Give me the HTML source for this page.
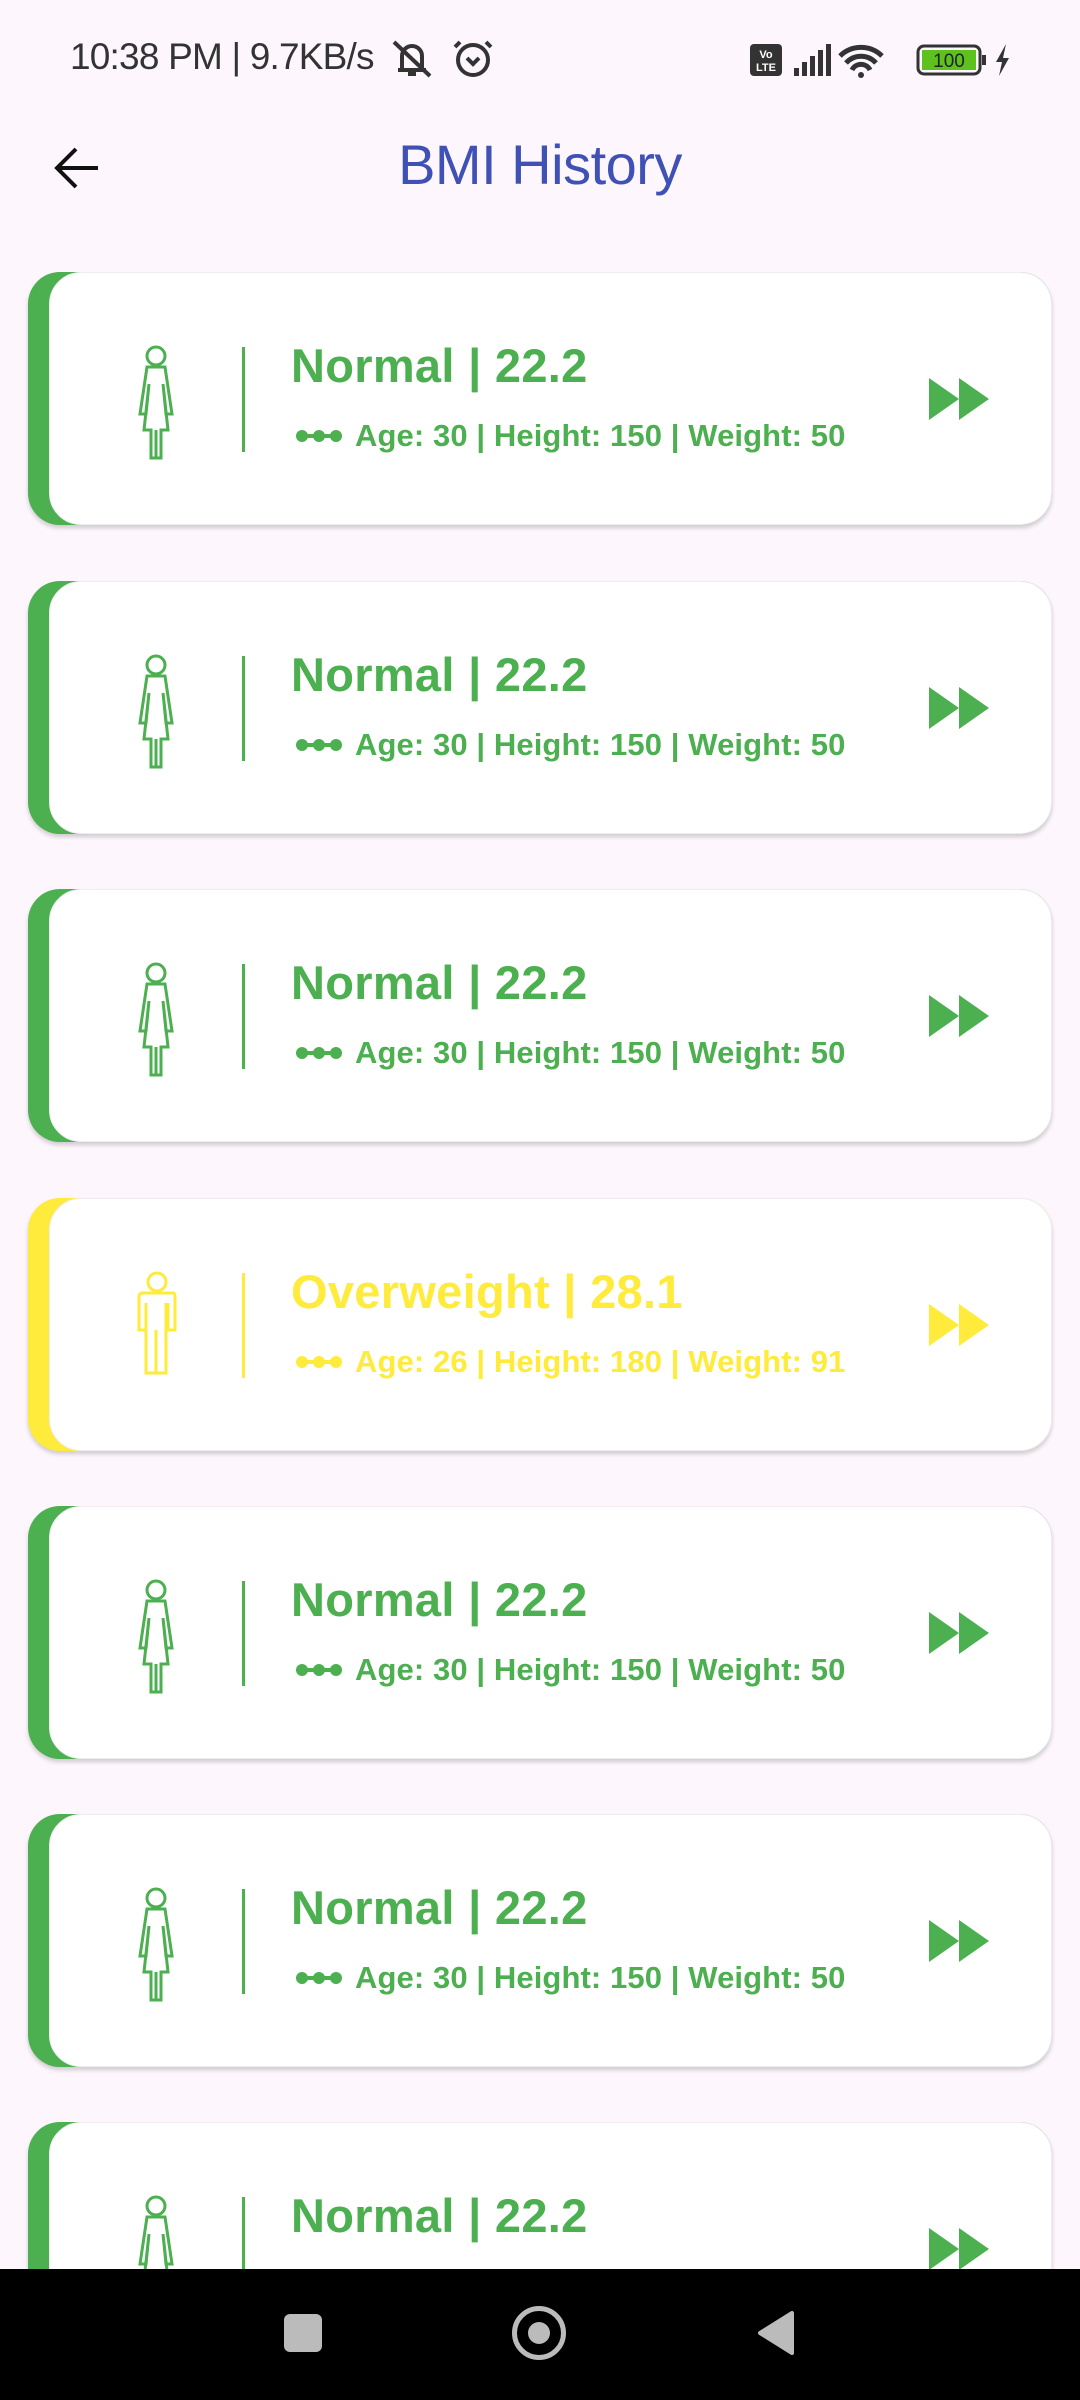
<!DOCTYPE html>
<html><head><meta charset="utf-8"><style>
*{margin:0;padding:0;box-sizing:border-box}
body{width:1080px;height:2400px;background:#fdf7fd;font-family:"Liberation Sans",sans-serif;position:relative;overflow:hidden}
.sb{position:absolute;top:36px;left:70px;font-size:37px;color:#333;letter-spacing:-0.8px}
.title{position:absolute;top:132px;left:0;width:1080px;text-align:center;font-size:56px;color:#3f51b5;letter-spacing:-0.5px}
.card{position:absolute;left:28px;width:1024px;height:253px;border-radius:32px;box-shadow:0 3px 4px rgba(0,0,0,0.18)}
.card .in{position:absolute;left:21px;right:0;top:0;bottom:0;background:#fff;border-radius:32px;border:1px solid #eee}
.card svg{position:absolute;left:-28px;top:0}
.t1{position:absolute;left:263px;top:66px;font-size:47px;font-weight:bold;white-space:nowrap;letter-spacing:0.3px}
.t2{position:absolute;left:327px;top:146px;font-size:31px;font-weight:bold;white-space:nowrap;letter-spacing:0.1px}
.g{background:#4caf50;color:#4caf50}.y{background:#ffeb3b;color:#ffeb3b}
.nav{position:absolute;left:0;top:2269px;width:1080px;height:131px;background:#000}
</style></head><body>
<div class="sb">10:38 PM | 9.7KB/s</div>
<svg style="position:absolute;left:390px;top:36px" width="110" height="46" viewBox="0 0 110 46" fill="none" stroke="#333" stroke-width="4">
<path d="M12 34 V20 a10 10 0 0 1 20 0 V34 M8 34 H36 M18 38 h8 M4 6 L40 40"/>
<circle cx="83" cy="24" r="15"/><path d="M77 22 l6 6 6-6 M70 6 l-5 5 M96 6 l5 5"/></svg>
<svg style="position:absolute;left:748px;top:40px" width="270" height="40" viewBox="0 0 270 40">
<rect x="2" y="4" width="32" height="32" rx="4" fill="#333"/><text x="18" y="18" font-size="11" fill="#fff" text-anchor="middle" font-family="Liberation Sans" font-weight="bold">Vo</text><text x="18" y="31" font-size="11" fill="#fff" text-anchor="middle" font-family="Liberation Sans" font-weight="bold">LTE</text>
<g fill="#333"><rect x="46" y="28" width="5" height="8"/><rect x="54" y="22" width="5" height="14"/><rect x="62" y="16" width="5" height="20"/><rect x="70" y="10" width="5" height="26"/><rect x="78" y="4" width="5" height="32"/></g>
<path d="M92 16 a30 30 0 0 1 42 0 M98 23 a20 20 0 0 1 30 0 M104 30 a10 10 0 0 1 18 0" stroke="#333" stroke-width="5" fill="none"/><circle cx="113" cy="35" r="3" fill="#333"/>
<rect x="170" y="6" width="62" height="28" rx="6" fill="none" stroke="#333" stroke-width="3"/><rect x="174" y="10" width="54" height="20" fill="#5dc21e"/><rect x="234" y="15" width="4" height="10" fill="#333"/>
<text x="201" y="27" font-size="19" text-anchor="middle" fill="#222" font-family="Liberation Sans">100</text>
<path d="M258 4 L248 22 h6 l-3 14 10-18 h-6 z" fill="#333"/></svg>
<svg style="position:absolute;left:52px;top:146px" width="50" height="44" viewBox="0 0 50 44" fill="none" stroke="#111" stroke-width="4"><path d="M46 22 H6 M24 3 L5 22 L24 41"/></svg>
<div class="title">BMI History</div>

<div id="cards"></div>
<script>
const tops=[272,581,889,1198,1506,1814,2122];
const fem='<circle cx="156" cy="84" r="9"/><path d="M147 95 H165 L172 142 H166 L163 112 L168 158 H161 V186 H151 V158 H144 L149 112 L146 142 H140 Z M156 158 V186"/>';
const male='<circle cx="157" cy="84" r="9"/><path d="M141 95 H173 Q175 95 175 99 V132 H168 V105 M146 105 V132 H139 V99 Q139 95 143 95 M146 105 V175 H166 V105 M156 132 V175"/>';
let h='';
tops.forEach((t,i)=>{
 const y=i==3;const c=y?'y':'g';const col=y?'#ffeb3b':'#4caf50';
 h+=`<div class="card ${c}" style="top:${t}px"><div class="in"></div>
 <svg width="1080" height="253" viewBox="0 0 1080 253">
 <g fill="none" stroke="${col}" stroke-width="3">${y?male:fem}</g>
 <rect x="242" y="75" width="3" height="105" fill="${col}"/>
 <g fill="${col}"><circle cx="302" cy="164" r="6"/><circle cx="319" cy="164" r="6"/><circle cx="336" cy="164" r="6"/><rect x="302" y="162" width="34" height="4"/>
 <path d="M929 106 L959 127 L929 148 Z M959 106 L989 127 L959 148 Z"/></g></svg>
 <div class="t1" style="background:none;color:${col}">${y?'Overweight | 28.1':'Normal | 22.2'}</div>
 <div class="t2" style="background:none;color:${col}">${y?'Age: 26 | Height: 180 | Weight: 91':'Age: 30 | Height: 150 | Weight: 50'}</div></div>`;
});
document.getElementById('cards').innerHTML=h;
</script>
<div class="nav">
<div style="position:absolute;left:284px;top:45px;width:38px;height:38px;border-radius:6px;background:#bbb"></div>
<div style="position:absolute;left:512px;top:37px;width:54px;height:54px;border-radius:50%;border:5px solid #bbb"></div>
<div style="position:absolute;left:528px;top:53px;width:22px;height:22px;border-radius:50%;background:#bbb"></div>
<svg style="position:absolute;left:756px;top:40px" width="40" height="48" viewBox="0 0 40 48"><path d="M36 4 V44 L4 24 Z" fill="#bbb" stroke="#bbb" stroke-width="4" stroke-linejoin="round"/></svg>
</div>
</body></html>
